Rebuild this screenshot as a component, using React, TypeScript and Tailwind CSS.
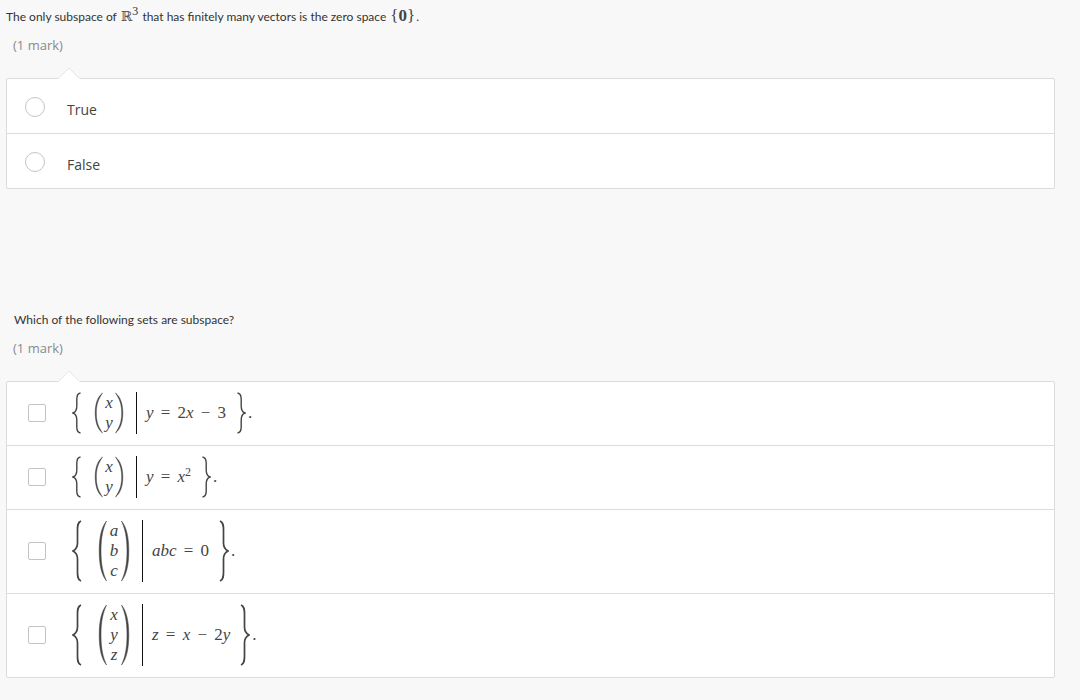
import { useState } from 'react'
import type { ReactNode } from 'react'

type Token = { kind: 'var' | 'num' | 'op'; text: string; sup?: string }

type SetOption = {
  id: string
  vector: string[]
  condition: Token[][]
}

const v = (text: string, sup?: string): Token => ({ kind: 'var', text, sup })
const n = (text: string): Token => ({ kind: 'num', text })
const op = (text: string): Token => ({ kind: 'op', text })

const SET_OPTIONS: SetOption[] = [
  {
    id: 'line',
    vector: ['x', 'y'],
    condition: [[v('y')], [op('=')], [n('2'), v('x')], [op('−')], [n('3')]],
  },
  {
    id: 'parabola',
    vector: ['x', 'y'],
    condition: [[v('y')], [op('=')], [v('x', '2')]],
  },
  {
    id: 'product',
    vector: ['a', 'b', 'c'],
    condition: [[v('abc')], [op('=')], [n('0')]],
  },
  {
    id: 'plane',
    vector: ['x', 'y', 'z'],
    condition: [[v('z')], [op('=')], [v('x')], [op('−')], [n('2'), v('y')]],
  },
]

const TRUE_FALSE = ['True', 'False']

// Stretchy delimiters, drawn at the height of the vector they wrap
function Brace({ tall, flip }: { tall: boolean; flip?: boolean }) {
  const d = tall
    ? 'M9 1 C5.5 2.5 5.5 6 5.5 10 V23 C5.5 27.5 4 29.5 1 31 C4 32.5 5.5 34.5 5.5 39 V52 C5.5 56 5.5 59.5 9 61'
    : 'M8.5 1 C5 1.5 4.8 4 4.8 7 V14 C4.8 18 4 20 1 21 C4 22 4.8 24 4.8 28 V35 C4.8 38 5 40.5 8.5 41'
  return (
    <svg
      width="10"
      height={tall ? 62 : 42}
      viewBox={tall ? '0 0 10 62' : '0 0 10 42'}
      fill="none"
      stroke="#444"
      strokeWidth={tall ? 1.7 : 1.4}
      className={flip ? 'shrink-0 -scale-x-100' : 'shrink-0'}
      aria-hidden="true"
    >
      <path d={d} />
    </svg>
  )
}

function Paren({ tall, flip }: { tall: boolean; flip?: boolean }) {
  const d = tall
    ? 'M8.5 1 C3.5 7 1.2 17 1.2 31 C1.2 45 3.5 55 8.5 61 C5 53 3 45 3 31 C3 17 5 9 8.5 1 Z'
    : 'M8.5 1 C3.5 5 1.2 12 1.2 21 C1.2 30 3.5 37 8.5 41 C4.5 35 2.3 30 2.3 21 C2.3 12 4.5 7 8.5 1 Z'
  return (
    <svg
      width="9"
      height={tall ? 62 : 42}
      viewBox={tall ? '0 0 9 62' : '0 0 9 42'}
      fill="#444"
      stroke="#444"
      strokeWidth="0.5"
      className={flip ? 'shrink-0 -scale-x-100' : 'shrink-0'}
      aria-hidden="true"
    >
      <path d={d} />
    </svg>
  )
}

function Formula({ vector, condition }: { vector: string[]; condition: Token[][] }) {
  const tall = vector.length > 2
  return (
    <span className="flex items-center font-['Liberation_Serif',serif] text-[17px] leading-5 text-[#444]">
      <Brace tall={tall} />
      <span className={tall ? 'ml-4 flex items-center' : 'ml-3 flex items-center'}>
        <Paren tall={tall} />
        <span
          className={
            tall
              ? 'flex w-[14px] flex-col items-center italic'
              : 'flex w-3 flex-col items-center italic'
          }
        >
          {vector.map((name) => (
            <span key={name}>{name}</span>
          ))}
        </span>
        <Paren tall={tall} flip />
      </span>
      <span className="ml-3 w-px self-stretch bg-[#111]" />
      <span className="mr-[10px] ml-[9px] flex items-center gap-[6px]">
        {condition.map((group, i) => (
          <span key={i} className="flex">
            {group.map((t) => (
              <span
                key={t.text}
                className={
                  t.kind === 'var' ? 'italic' : t.kind === 'op' ? 'w-3 text-center' : ''
                }
              >
                {t.text}
                {t.sup && <sup className="text-[12px] not-italic">{t.sup}</sup>}
              </span>
            ))}
          </span>
        ))}
      </span>
      <Brace tall={tall} flip />
      <span className="ml-[2px]">.</span>
    </span>
  )
}

function AnswerCard({ children }: { children: ReactNode }) {
  return (
    <div className="relative mt-[23px] rounded-[2px] border border-[#dcdcdc] bg-white">
      <svg
        width="22"
        height="12"
        viewBox="0 0 22 12"
        className="absolute -top-3 left-[51px]"
        aria-hidden="true"
      >
        <path d="M0 12 L11 1 L22 12 Z" fill="#fff" />
        <path d="M0.5 11.5 L11 1 L21.5 11.5" fill="none" stroke="#e6e6e6" strokeWidth="1" />
      </svg>
      {children}
    </div>
  )
}

export default function App() {
  const [answer, setAnswer] = useState('')
  const [selected, setSelected] = useState<string[]>([])

  const toggle = (id: string) => {
    setSelected((prev) => (prev.includes(id) ? prev.filter((s) => s !== id) : [...prev, id]))
  }

  return (
    <main className="min-h-screen bg-[#f8f8f8] pt-[7px] pr-[25px] pb-[21px] pl-[6px] font-['Open_Sans',sans-serif] text-[#444]">
      <section>
        <h2 className="font-['Lato',sans-serif] text-[12px] leading-5 text-[#333]">
          The only subspace of{' '}
          <span className="mx-px">
            <span className="font-['DejaVu_Serif',serif] text-[14px] leading-none text-[#555]">
              ℝ
            </span>
            <sup className="font-['Liberation_Serif',serif] text-[12px]">3</sup>
          </span>{' '}
          that has finitely many vectors is the zero space{' '}
          <span className="mx-px font-['Liberation_Serif',serif] text-[17px] leading-none text-[#444]">
            {'{'}
            <b>0</b>
            {'}'}
          </span>
          .
        </h2>
        <p className="mt-2 pl-[7px] text-[13px] leading-5 text-[#8a8a8a]">(1 mark)</p>

        <AnswerCard>
          {TRUE_FALSE.map((label) => (
            <label
              key={label}
              className="flex h-[55px] items-center border-b border-[#dcdcdc] pt-[2px] pl-[18px] text-[14px] last:h-[54px] last:border-b-0"
            >
              <input
                type="radio"
                name="zero-space"
                value={label}
                checked={answer === label}
                onChange={() => setAnswer(label)}
                className="size-5 appearance-none rounded-full border border-[#c4c4c4] bg-white checked:border-[6px] checked:border-gray-500"
              />
              <span className="pt-1 pl-[22px]">{label}</span>
            </label>
          ))}
        </AnswerCard>
      </section>

      <section className="mt-[121px]">
        <h2 className="pl-2 font-['Lato',sans-serif] text-[12px] leading-5 text-[#333]">
          Which of the following sets are subspace?
        </h2>
        <p className="mt-2 pl-[7px] text-[13px] leading-5 text-[#8a8a8a]">(1 mark)</p>

        <AnswerCard>
          {SET_OPTIONS.map((option) => (
            <label
              key={option.id}
              className="flex items-center border-b border-[#dcdcdc] pt-[10px] pb-[11px] pl-[21px] last:border-b-0"
            >
              <input
                type="checkbox"
                checked={selected.includes(option.id)}
                onChange={() => toggle(option.id)}
                className="mr-[26px] size-[18px] appearance-none rounded-[2px] border border-[#c4c4c4] bg-white checked:bg-gray-500"
              />
              <Formula vector={option.vector} condition={option.condition} />
            </label>
          ))}
        </AnswerCard>
      </section>
    </main>
  )
}
